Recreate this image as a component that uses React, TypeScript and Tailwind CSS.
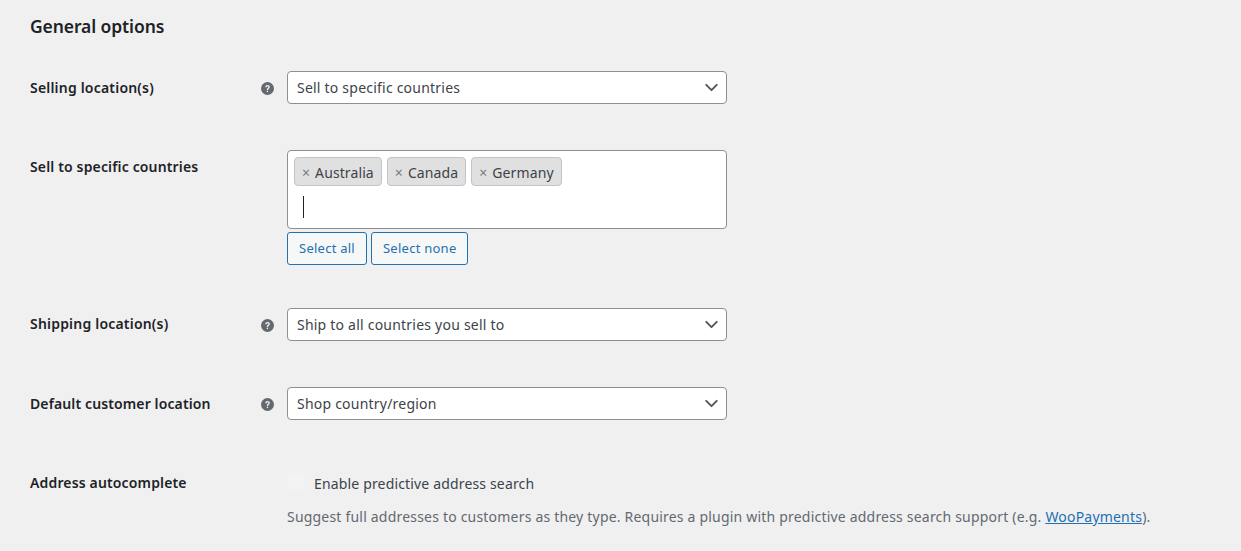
import { ChevronDown } from "lucide-react";

const font = { sans: "font-['Noto_Sans',sans-serif]" };

function HelpIcon() {
    return (
        <div className="w-[26px] shrink-0 h-[13px] mt-[1px]">
            <svg width="13" height="13" viewBox="0 0 13 13" className="block">
                <circle cx="6.5" cy="6.5" r="6.5" fill="#646970" />
                <path d="M4.3 5.1c0-1.3 1-2.1 2.3-2.1 1.2 0 2.2.7 2.2 1.9 0 1.7-1.7 1.6-1.7 3H5.8c0-2 1.6-1.9 1.6-2.9 0-.4-.3-.7-.8-.7s-.9.3-.9.9H4.3z" fill="#f0f0f1" />
                <rect x="5.8" y="8.7" width="1.3" height="1.4" fill="#f0f0f1" />
            </svg>
        </div>
    );
}

function SelectBox({ value }: { value: string }) {
    return (
        <div className="w-[440px] h-[33px] bg-white border border-[#8c8f94] rounded-[4px] flex items-center justify-between pl-[9px] pr-[4px] text-[#3c434a] text-[14px] tracking-[0.22px]">
            <span>{value}</span>
            <ChevronDown className="w-[21px] h-[21px] text-[#50575e]" strokeWidth={2.2} />
        </div>
    );
}

function Tag({ label }: { label: string }) {
    return (
        <div className="h-[29px] flex items-center gap-[5px] bg-[#e0e0e0] border border-[#c3c4c7] rounded-[4px] px-[7px] pt-[1px] text-[14px] tracking-[0.1px] text-[#3c434a]">
            <span className="text-[#787c82] text-[14px]">×</span>
            <span>{label}</span>
        </div>
    );
}

function OutlineButton({ label }: { label: string }) {
    return (
        <div className="h-[33px] flex items-center px-[11px] bg-[#f6f7f7] border border-[#2271b1] rounded-[3px] text-[13px] tracking-[0.25px] text-[#2271b1]">
            {label}
        </div>
    );
}

export default function App() {
    return (
        <div className={`${font.sans} w-[1241px] h-[551px] overflow-hidden bg-[#f0f0f1] pl-[30px] pt-[13px] text-[#1d2327]`}>
            <h2 className="text-[17.5px] leading-[26px] font-semibold tracking-[-0.1px]">General options</h2>

            <div className="flex items-center mt-[32px] h-[33px]">
                <label className="w-[231px] text-[14px] font-semibold tracking-[0.2px]">Selling location(s)</label>
                <HelpIcon />
                <SelectBox value="Sell to specific countries" />
            </div>

            <div className="flex mt-[46px]">
                <label className="w-[257px] text-[14px] font-semibold tracking-[0.15px] leading-[20px] pt-[7px]">Sell to specific countries</label>
                <div>
                    <div className="w-[440px] h-[79px] bg-white border border-[#8c8f94] rounded-[4px] px-[6px] pt-[6px]">
                        <div className="flex gap-[5px]">
                            <Tag label="Australia" />
                            <Tag label="Canada" />
                            <Tag label="Germany" />
                        </div>
                        <div className="w-[1px] h-[22px] bg-[#1d2327] ml-[9px] mt-[10px]" />
                    </div>
                    <div className="flex gap-[4px] mt-[3px]">
                        <OutlineButton label="Select all" />
                        <OutlineButton label="Select none" />
                    </div>
                </div>
            </div>

            <div className="flex items-center mt-[43px] h-[33px]">
                <label className="w-[231px] text-[14px] font-semibold tracking-[0.2px] mb-[2px]">Shipping location(s)</label>
                <HelpIcon />
                <SelectBox value="Ship to all countries you sell to" />
            </div>

            <div className="flex items-center mt-[46px] h-[33px]">
                <label className="w-[231px] text-[14px] font-semibold tracking-[0.12px]">Default customer location</label>
                <HelpIcon />
                <SelectBox value="Shop country/region" />
            </div>

            <div className="flex mt-[53px]">
                <label className="w-[257px] text-[14px] font-semibold tracking-[0.15px] leading-[20px]">Address autocomplete</label>
                <div className="-mt-[1px]">
                    <div className="flex items-center h-[22px] gap-[9px]">
                        <div className="w-[18px] h-[18px] mb-[4px] rounded-[4px] bg-[#f3f3f3] border border-[#f1f1f1]" />
                        <span className="text-[14px] tracking-[0.16px] text-[#3c434a]">Enable predictive address search</span>
                    </div>
                    <p className="mt-[13px] text-[14px] leading-[20px] tracking-[0.2px] text-[#646970] whitespace-nowrap">
                        Suggest full addresses to customers as they type. Requires a plugin with predictive address search support (e.g.{" "}
                        <a className="text-[#2271b1] underline">WooPayments</a>).
                    </p>
                </div>
            </div>
        </div>
    );
}
